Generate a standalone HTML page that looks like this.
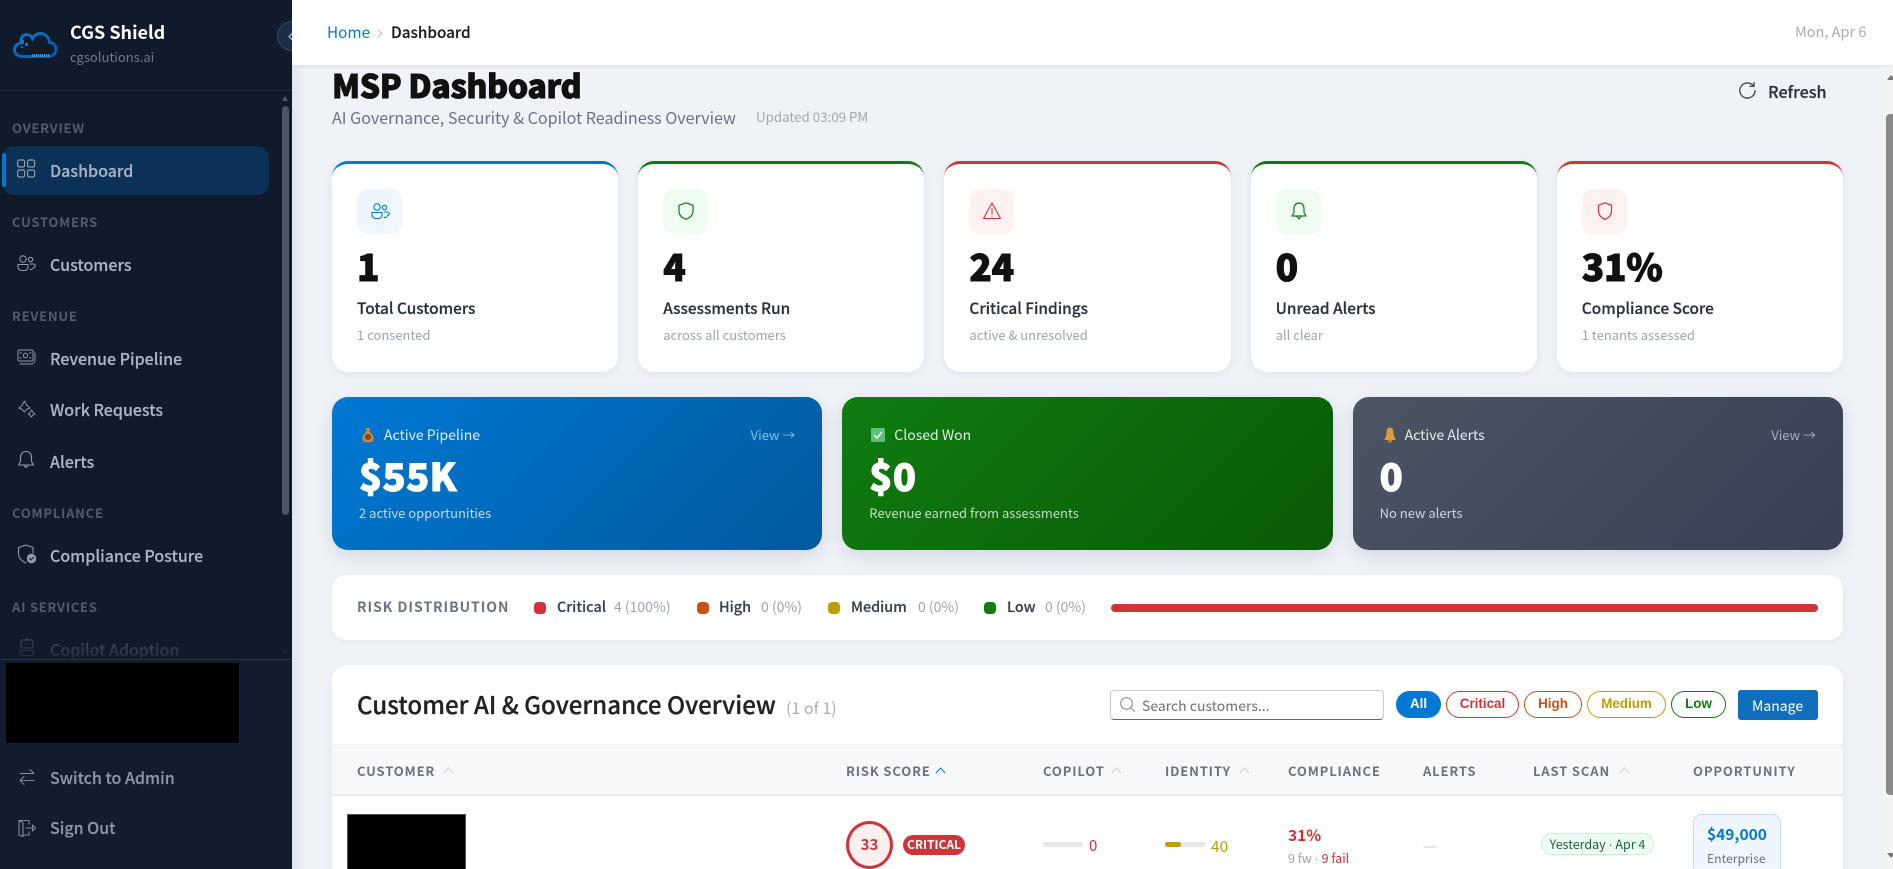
<!DOCTYPE html>
<html><head><meta charset="utf-8"><title>MSP Dashboard</title>
<style>
*{box-sizing:border-box}
html,body{margin:0;padding:0;width:1893px;height:869px;overflow:hidden;background:#eff2f7;font-family:"Noto Sans CJK SC","Liberation Sans",sans-serif}
#w{position:relative;width:1893px;height:869px;overflow:hidden;background:#eff2f7}
.a{position:absolute}
.t{position:absolute;line-height:0;white-space:nowrap}
.side{position:absolute;left:0;top:0;width:292px;height:869px;background:#0f1a2b;overflow:hidden}
.sec{font-size:13px;font-weight:700;color:#505b6b;letter-spacing:.75px;left:12px}
.nav{font-size:16px;font-weight:500;color:#a9b5c4;left:50px;-webkit-text-stroke:.15px currentColor}
.i{position:absolute;fill:none;stroke-linecap:round;stroke-linejoin:round}
.card{position:absolute;top:161px;width:286.2px;height:211px;background:#fff;border-radius:16px;border-top:3px solid;box-shadow:0 2px 8px rgba(30,50,80,.07)}
.ib{position:absolute;left:25px;top:25px;width:45px;height:45px;border-radius:11px}
.val{left:25px;font-size:37px;font-weight:900;color:#111;top:101px;-webkit-text-stroke:1px #111;letter-spacing:-.3px}
.lab{left:25px;top:144px;font-size:15.4px;font-weight:500;color:#2b3240;-webkit-text-stroke:.2px currentColor}
.sub{left:25px;top:171px;font-size:13px;color:#9ca3af}
.g{position:absolute;top:397px;width:490.3px;height:153px;border-radius:16px;box-shadow:0 6px 16px rgba(30,50,80,.13);color:#fff}
.gt{left:52px;top:38px;font-size:14px;color:rgba(255,255,255,.88)}
.gv{left:27px;top:78px;font-size:38px;font-weight:900;color:#fff;-webkit-text-stroke:1px #fff;letter-spacing:.4px}
.gs{left:27px;top:116px;font-size:13px;color:rgba(255,255,255,.75)}
.gl{right:27px;top:38px;font-size:13px;color:rgba(255,255,255,.55)}
.dot{position:absolute;top:602px;width:12px;height:12px;border-radius:4px}
.rl{top:607px;font-size:14.4px;font-weight:500;color:#374151;-webkit-text-stroke:.15px currentColor}
.rv{top:607px;font-size:14px;color:#9ca3af}
.pill{position:absolute;top:691px;height:27px;border-radius:14px;border:1px solid;font:700 13.4px "Liberation Sans",sans-serif;text-align:center;line-height:24px;background:#fff}
.th{top:771px;font-size:13px;font-weight:700;color:#6b7280;letter-spacing:.85px}
.car{position:absolute;top:767px;fill:none;stroke:#cfd3d9;stroke-width:1}
.d{font-family:"Liberation Sans",sans-serif}
</style></head><body><div id="w">

<div class="a" style="left:292px;top:65px;width:14px;height:804px;background:linear-gradient(90deg,#e2e6ec,#eff2f7)"></div>

<div class="t" style="left:332px;top:85px;font-size:32px;font-weight:900;color:#111;-webkit-text-stroke:.9px #111;letter-spacing:-.35px">MSP Dashboard</div>
<div class="t" style="left:332px;top:116.500px;font-size:16.100px;color:#6b7280">AI Governance, Security &amp; Copilot Readiness Overview</div>
<div class="t" style="left:756px;top:116.500px;font-size:13.300px;color:#a3a8b0">Updated 03:09 PM</div>
<svg class="i" style="left:1738px;top:81px" width="19" height="19" viewBox="0 0 19 19" stroke="#444" stroke-width="1.3"><path d="M15.5 5A7.6 7.6 0 1 0 17 9.5"/><path d="M16 1.5V5.4H12"/></svg>
<div class="t" style="left:1768px;top:91px;font-size:16.200px;font-weight:500;color:#2b3240;-webkit-text-stroke:.2px currentColor">Refresh</div>

<!-- KPI cards -->
<div class="card" style="left:332px;border-color:#0078d4">
 <div class="ib" style="background:#eff6fe"></div>
 <svg class="i" style="left:38px;top:37px" width="20" height="20" viewBox="0 0 20 20" stroke="#0078d4" stroke-width="1.1"><circle cx="7" cy="6" r="3.2"/><circle cx="14.5" cy="6.5" r="2.2"/><path d="M2 11.5h10v2.5a3.5 3.5 0 0 1-3.5 3.5h-3A3.5 3.5 0 0 1 2 14z"/><path d="M14 11h3.500a1.500 1.500 0 0 1 0 3.500 3 3 0 0 1-3.500 2"/></svg>
 <div class="t val">1</div><div class="t lab">Total Customers</div><div class="t sub">1 consented</div>
</div>
<div class="card" style="left:638.200px;border-color:#107c10">
 <div class="ib" style="background:#effcf1"></div>
 <svg class="i" style="left:38px;top:37px" width="20" height="20" viewBox="0 0 20 20" stroke="#107c10" stroke-width="1.2"><path d="M10 1.800 17 4.300V10c0 4-3 6.800-7 8.300C6 16.800 3 14 3 10V4.300z"/></svg>
 <div class="t val">4</div><div class="t lab">Assessments Run</div><div class="t sub">across all customers</div>
</div>
<div class="card" style="left:944.400px;border-color:#d13438">
 <div class="ib" style="background:#fdf1f1"></div>
 <svg class="i" style="left:38px;top:37px" width="20" height="20" viewBox="0 0 20 20" stroke="#d13438" stroke-width="1.1"><path d="M10 2 18.500 17.500H1.500z"/><path d="M10 7.500v5.500M10 15v.4"/></svg>
 <div class="t val">24</div><div class="t lab">Critical Findings</div><div class="t sub">active &amp; unresolved</div>
</div>
<div class="card" style="left:1250.600px;border-color:#107c10">
 <div class="ib" style="background:#effcf1"></div>
 <svg class="i" style="left:38px;top:37px" width="20" height="20" viewBox="0 0 20 20" stroke="#107c10" stroke-width="1.2"><path d="M10 2c3 0 5 2.300 5 5.500v4l2 3.500H3l2-3.500v-4C5 4.300 7 2 10 2z"/><path d="M8 15.500 10 18l2-2.500"/></svg>
 <div class="t val">0</div><div class="t lab">Unread Alerts</div><div class="t sub">all clear</div>
</div>
<div class="card" style="left:1556.800px;border-color:#d13438">
 <div class="ib" style="background:#fdf1f1"></div>
 <svg class="i" style="left:38px;top:37px" width="20" height="20" viewBox="0 0 20 20" stroke="#d13438" stroke-width="1.2"><path d="M10 1.800 16.500 4.300V10c0 4-3 6.800-6.500 8.300C6.500 16.800 3.500 14 3.500 10V4.300z"/></svg>
 <div class="t val">31%</div><div class="t lab">Compliance Score</div><div class="t sub">1 tenants assessed</div>
</div>

<!-- gradient cards -->
<div class="g" style="left:332px;background:linear-gradient(135deg,#0078d4,#005a9e)">
 <svg class="a" style="left:28px;top:30px" width="16" height="16" viewBox="0 0 16 16"><path d="M5.500 1h5l-1.500 3.500H7z" fill="#c98a3c"/><path d="M6.500 4.500h3C13 7 14 10 13.500 12.500 13 15 10.500 15.500 8 15.500S3 15 2.500 12.500C2 10 3 7 6.500 4.500z" fill="#c4843c"/><circle cx="8" cy="10" r="3" fill="#7a4a22"/></svg>
 <div class="t gt">Active Pipeline</div><div class="t gl">View →</div>
 <div class="t gv">$55K</div><div class="t gs">2 active opportunities</div>
</div>
<div class="g" style="left:842.300px;background:linear-gradient(135deg,#107c10,#0a5a08)">
 <svg class="a" style="left:28px;top:30px" width="16" height="16" viewBox="0 0 16 16"><rect x="1" y="1" width="14" height="14" rx="1.500" fill="#5fc07a"/><path d="M4 8l3 3 5-6" fill="none" stroke="#fff" stroke-width="1.400"/></svg>
 <div class="t gt">Closed Won</div>
 <div class="t gv">$0</div><div class="t gs">Revenue earned from assessments</div>
</div>
<div class="g" style="left:1352.600px;background:linear-gradient(135deg,#4b5563,#374056)">
 <svg class="a" style="left:29px;top:30px" width="16" height="16" viewBox="0 0 16 16"><path d="M8 .5c2.500 0 3.500 2.500 3.500 5 0 3 1 5.500 2.500 7.500H2c1.500-2 2.500-4.500 2.500-7.500 0-2.500 1-5 3.500-5z" fill="#e09a3a"/><rect x="6" y="13" width="4" height="2.500" rx="1" fill="#c9822c"/></svg>
 <div class="t gt">Active Alerts</div><div class="t gl">View →</div>
 <div class="t gv">0</div><div class="t gs">No new alerts</div>
</div>

<!-- risk -->
<div class="a" style="left:332px;top:575px;width:1511px;height:65px;background:#fff;border-radius:14px;box-shadow:0 2px 6px rgba(30,50,80,.05)"></div>
<div class="t" style="left:357px;top:607px;font-size:14px;font-weight:700;color:#6b7280;letter-spacing:.95px">RISK DISTRIBUTION</div>
<div class="dot" style="left:534px;background:#d13438"></div><div class="t rl" style="left:557px">Critical</div><div class="t rv" style="left:614px">4 (100%)</div>
<div class="dot" style="left:697px;background:#ca5010"></div><div class="t rl" style="left:719px">High</div><div class="t rv" style="left:761px">0 (0%)</div>
<div class="dot" style="left:828px;background:#c19c00"></div><div class="t rl" style="left:851px">Medium</div><div class="t rv" style="left:918px">0 (0%)</div>
<div class="dot" style="left:984px;background:#107c10"></div><div class="t rl" style="left:1007px">Low</div><div class="t rv" style="left:1045px">0 (0%)</div>
<div class="a" style="left:1111px;top:604px;width:707px;height:8px;border-radius:4px;background:#d13438"></div>

<!-- table -->
<div class="a" style="left:332px;top:665px;width:1511px;height:230px;background:#fff;border-radius:16px;box-shadow:0 2px 8px rgba(30,50,80,.06)"></div>
<div class="t" style="left:357px;top:704px;font-size:24.100px;font-weight:500;color:#222;-webkit-text-stroke:.25px currentColor">Customer AI &amp; Governance Overview</div>
<div class="t" style="left:786px;top:707px;font-size:16px;color:#a8adb5">(1 of 1)</div>

<div class="a" style="left:1109.500px;top:690px;width:274px;height:30px;border:1px solid #ccc;border-bottom:1.500px solid #666;border-radius:4px;background:#fff"></div>
<svg class="i" style="left:1119px;top:696px" width="17" height="17" viewBox="0 0 17 17" stroke="#8a8f96" stroke-width="1.100"><circle cx="7.500" cy="7.500" r="5.800"/><path d="M11.800 11.800 15.500 15.500"/></svg>
<div class="t" style="left:1142px;top:706px;font-size:14px;color:#6b6f76">Search customers...</div>

<div class="pill" style="left:1396px;width:45px;background:#0078d4;border-color:#0078d4;color:#fff">All</div>
<div class="pill" style="left:1446px;width:73px;border-color:#d13438;color:#d13438">Critical</div>
<div class="pill" style="left:1524px;width:58px;border-color:#ca5010;color:#ca5010">High</div>
<div class="pill" style="left:1587px;width:79px;border-color:#c19c00;color:#c19c00">Medium</div>
<div class="pill" style="left:1671px;width:55px;border-color:#107c10;color:#107c10">Low</div>
<div class="a" style="left:1738px;top:690px;width:80px;height:30px;background:#106ebe;border-radius:3px"></div>
<div class="t" style="left:1752px;top:706px;font-size:14px;color:#fff">Manage</div>

<div class="a" style="left:332px;top:744px;width:1511px;height:52px;background:#f7f8fa;border-top:1px solid #f0f1f4;border-bottom:2px solid #e5e7eb"></div>
<div class="t th" style="left:357px">CUSTOMER</div><svg class="car" style="left:443px" width="11" height="7" viewBox="0 0 11 7"><path d="M1 6 5.500 1 10 6"/></svg>
<div class="t th" style="left:846px">RISK SCORE</div><svg class="car" style="left:935px;stroke:#0078d4" width="11" height="7" viewBox="0 0 11 7"><path d="M1 6 5.500 1 10 6"/></svg>
<div class="t th" style="left:1043px">COPILOT</div><svg class="car" style="left:1111px" width="11" height="7" viewBox="0 0 11 7"><path d="M1 6 5.500 1 10 6"/></svg>
<div class="t th" style="left:1165px">IDENTITY</div><svg class="car" style="left:1239px" width="11" height="7" viewBox="0 0 11 7"><path d="M1 6 5.500 1 10 6"/></svg>
<div class="t th" style="left:1288px">COMPLIANCE</div>
<div class="t th" style="left:1423px">ALERTS</div>
<div class="t th" style="left:1533px">LAST SCAN</div><svg class="car" style="left:1619px" width="11" height="7" viewBox="0 0 11 7"><path d="M1 6 5.500 1 10 6"/></svg>
<div class="t th" style="left:1693px">OPPORTUNITY</div>

<div class="a" style="left:347px;top:814px;width:119px;height:60px;background:#000;border:1px solid #555"></div>
<div class="a" style="left:846px;top:821px;width:47px;height:48px;border-radius:50%;border:3px solid #d13438;background:#fbf0f0;color:#d13438;font-size:15px;font-weight:700;text-align:center;line-height:41px">33</div>
<div class="a" style="left:903px;top:835px;width:62px;height:20px;border-radius:10px;background:#d13438;color:#fff;font-size:12px;font-weight:700;text-align:center;line-height:19px">CRITICAL</div>
<div class="a" style="left:1043px;top:842px;width:40px;height:5px;border-radius:3px;background:#e5e7eb"></div>
<div class="t" style="left:1089px;top:846px;font-size:15px;color:#d13438">0</div>
<div class="a" style="left:1165px;top:842px;width:41px;height:5px;border-radius:3px;background:#e5e7eb"></div>
<div class="a" style="left:1165px;top:842px;width:16px;height:5px;border-radius:3px;background:#c19c00"></div>
<div class="t" style="left:1211px;top:846px;font-size:15.500px;color:#c19c00">40</div>
<div class="t" style="left:1288px;top:835px;font-size:15.500px;font-weight:700;color:#d92c2c">31%</div>
<div class="t" style="left:1288px;top:858px;font-size:12.500px;color:#9ca3af">9 fw <span class="d">·</span> <span style="color:#d92c2c">9 fail</span></div>
<div class="t" style="left:1423px;top:846px;font-size:15px;color:#c4c8ce">—</div>
<div class="a" style="left:1541px;top:833px;width:113px;height:22px;border-radius:11px;background:#f0fdf4;border:1px solid #bbf7d0;color:#166534;font-size:12.500px;text-align:center;line-height:20px">Yesterday <span class="d">·</span> Apr 4</div>
<div class="a" style="left:1693px;top:814px;width:88px;height:70px;border-radius:9px;background:#eff6ff;border:1px solid #bfdbfe"></div>
<div class="t" style="left:1707px;top:834px;font-size:15.500px;font-weight:700;color:#0078d4">$49,000</div>
<div class="t" style="left:1707px;top:858px;font-size:12.200px;color:#6b7280">Enterprise</div>

<!-- main scrollbar -->
<div class="a" style="left:1883px;top:65px;width:10px;height:804px;background:#f3f4f6"></div>
<div class="a" style="left:1886px;top:114px;width:7px;height:681px;border-radius:4px 0 0 4px;background:#8a8a8a"></div>
<div class="a" style="left:1887px;top:75px;width:0;height:0;border-left:4px solid transparent;border-right:4px solid transparent;border-bottom:5px solid #777"></div>
<div class="a" style="left:1887px;top:853px;width:0;height:0;border-left:4px solid transparent;border-right:4px solid transparent;border-top:5px solid #777"></div>

<!-- header -->
<div class="a" style="left:292px;top:0;width:1601px;height:65px;background:#fff;box-shadow:0 1px 4px rgba(30,50,80,.08)"></div>
<div class="t" style="left:327px;top:32px;font-size:15.300px;color:#0078d4">Home</div>
<svg class="i" style="left:377px;top:29px" width="6" height="9" viewBox="0 0 6 9" stroke="#b5b9c0" stroke-width="1"><path d="M1 1 4.500 4.500 1 8"/></svg>
<div class="t" style="left:391px;top:32px;font-size:15.300px;font-weight:500;color:#1a1a1a;-webkit-text-stroke:.15px currentColor">Dashboard</div>
<div class="t" style="left:1795px;top:31.500px;font-size:14.500px;color:#a8adb5">Mon, Apr 6</div>

<!-- sidebar -->
<div class="side">
 <svg class="a" style="left:0;top:0" width="80" height="80" viewBox="0 0 80 80"><defs><linearGradient id="lg" x1="0" y1="0" x2="1" y2="1"><stop offset="0" stop-color="#1272c4"/><stop offset="1" stop-color="#0b5ba6"/></linearGradient></defs>
 <path d="M24 56.500H48C53.500 56.500 56 53 56 49.500 56 45.500 53 42.500 49.500 42.500 49 37 45 33.500 40.500 33.500 37 33.500 34 35.500 32.500 38.500 30.500 34 24 33 21.500 38 20.500 40 21 42 21 43 16.500 43.500 14.500 47 14.500 50 14.500 54 18 56.500 24 56.500Z" fill="none" stroke="url(#lg)" stroke-width="3"/>
 <path d="M32 55.500h18" stroke="#4f9ad8" stroke-width="3" stroke-dasharray="1 1"/>
 <rect x="20" y="40" width="4" height="4" fill="#1272c4"/><rect x="25" y="43" width="3" height="3" fill="#1272c4"/><rect x="21" y="46" width="2" height="2" fill="#1272c4"/></svg>
 <div class="t" style="left:70px;top:32px;font-size:18px;font-weight:700;color:#fff">CGS Shield</div>
 <div class="t" style="left:70px;top:56.500px;font-size:13px;color:#6f7a8a">cgsolutions.ai</div>
 <div class="a" style="left:0;top:90px;width:292px;height:1px;background:#222e40"></div>
 <div class="a" style="left:277px;top:21px;width:30px;height:30px;border-radius:50%;background:#1a2e48;border:1px solid #33465f"></div>
 <svg class="i" style="left:288px;top:32px" width="6" height="9" viewBox="0 0 6 9" stroke="#b4bfcc" stroke-width="1.200"><path d="M4.500 1 1 4.500 4.500 8"/></svg>

 <div class="a" style="left:282px;top:106px;width:7px;height:409px;border-radius:4px;background:#4b5563"></div>
 <div class="a" style="left:282px;top:96px;width:0;height:0;border-left:3.500px solid transparent;border-right:3.500px solid transparent;border-bottom:5px solid #4b5563"></div>
 <div class="a" style="left:282px;top:650px;width:0;height:0;border-left:3.500px solid transparent;border-right:3.500px solid transparent;border-top:5px solid #2b3646"></div>

 <div class="t sec" style="top:128px">OVERVIEW</div>
 <div class="a" style="left:2px;top:146px;width:267px;height:49px;border-radius:12px;background:#0b3157"></div>
 <div class="a" style="left:2px;top:153px;width:4px;height:34px;border-radius:2px;background:#0078d4"></div>
 <svg class="i" style="left:16px;top:158px" width="20" height="20" viewBox="0 0 20 20" stroke="#8e9bab" stroke-width="1.200"><rect x="1.600" y="2" width="7" height="7" rx="1.600"/><rect x="11.600" y="2" width="7" height="7" rx="1.600"/><rect x="1.600" y="12" width="7" height="7" rx="1.600"/><rect x="11.600" y="12" width="7" height="7" rx="1.600"/></svg>
 <div class="t nav" style="top:170px">Dashboard</div>

 <div class="t sec" style="top:222px">CUSTOMERS</div>
 <svg class="i" style="left:16px;top:253px" width="20" height="20" viewBox="0 0 20 20" stroke="#8e9bab" stroke-width="1.100"><circle cx="7" cy="6" r="3.200"/><circle cx="14.500" cy="6.500" r="2.200"/><path d="M2 11.500h10v2.500a3.500 3.500 0 0 1-3.500 3.500h-3A3.500 3.500 0 0 1 2 14z"/><path d="M14 11h3.500a1.500 1.500 0 0 1 0 3.500 3 3 0 0 1-3.500 2"/></svg>
 <div class="t nav" style="top:264px">Customers</div>

 <div class="t sec" style="top:316px">REVENUE</div>
 <svg class="i" style="left:16px;top:348px" width="20" height="18" viewBox="0 0 20 18" stroke="#8e9bab" stroke-width="1"><rect x="2" y="2" width="15" height="11" rx="1.500"/><circle cx="9.500" cy="7.500" r="2.200"/><path d="M19 5v7a4 4 0 0 1-4 4H4"/><path d="M4 5h1.500M4 10h1.500M13.500 5H15M13.500 10H15"/></svg>
 <div class="t nav" style="top:358px">Revenue Pipeline</div>
 <svg class="i" style="left:17px;top:399px" width="20" height="20" viewBox="0 0 20 20" stroke="#8e9bab" stroke-width="1"><path d="M7.500 2 10 6.500 13 9 9.500 10.500 7.500 13 5 10.500 2 9 5 6.500z"/><path d="M14.500 11 16 13.500 18 15 16 16 14.500 18 13 16 11 15 13 13.500z"/></svg>
 <div class="t nav" style="top:409px">Work Requests</div>
 <svg class="i" style="left:16px;top:450px" width="20" height="20" viewBox="0 0 20 20" stroke="#8e9bab" stroke-width="1.100"><path d="M10 1.500c3.500 0 5.500 2.500 5.500 6v4l2 3.500h-15l2-3.500v-4c0-3.500 2-6 5.500-6z"/><path d="M8 15.500 10 17.500l2-2"/></svg>
 <div class="t nav" style="top:461px">Alerts</div>

 <div class="t sec" style="top:513px">COMPLIANCE</div>
 <svg class="i" style="left:16px;top:543px" width="22" height="22" viewBox="0 0 22 22" stroke="#8e9bab" stroke-width="1.100"><path d="M10 2 17 4.500V10M10 20C5.500 18 2.500 15 2.500 10.500V4.500L10 2"/><circle cx="15.500" cy="15.500" r="4.800" fill="#8e9bab" stroke="none"/><path d="M13.500 15.500 15 17l2.500-2.800" stroke="#0f1a2b" stroke-width="1"/></svg>
 <div class="t nav" style="top:555px">Compliance Posture</div>

 <div class="t sec" style="top:607px">AI SERVICES</div>
 <svg class="i" style="left:17px;top:637px" width="20" height="20" viewBox="0 0 20 20" stroke="#4d5969" stroke-width="1.100"><rect x="4" y="3" width="12" height="8" rx="2"/><path d="M8 6.500v.5M12 6.500v.5M10 1v2M3 13.500h14v1.500a3.500 3.500 0 0 1-3.500 3.500h-7A3.500 3.500 0 0 1 3 15z"/></svg>
 <div class="t nav" style="top:649px;color:#4d5969">Copilot Adoption</div>
 <div class="a" style="left:0;top:632px;width:292px;height:27px;background:linear-gradient(180deg,rgba(15,26,43,0),rgba(15,26,43,.75))"></div>

 <div class="a" style="left:0;top:659px;width:292px;height:210px;background:#111c2e;border-top:1px solid #26344a"></div>
 <div class="a" style="left:6px;top:663px;width:234px;height:80px;background:#000;border-right:1px solid #3a1420"></div>
 <svg class="i" style="left:17px;top:767px" width="20" height="20" viewBox="0 0 20 20" stroke="#7f8a99" stroke-width="1.100"><path d="M3 6.500h14M13 2.500l4 4M3 13.500h14M7 9.500l-4 4 4 4"/></svg>
 <div class="t nav" style="top:777px;color:#8d97a6">Switch to Admin</div>
 <svg class="i" style="left:17px;top:818px" width="20" height="20" viewBox="0 0 20 20" stroke="#7f8a99" stroke-width="1.100"><path d="M12 6V2.500H2V17l4 1.500V17h6v-3"/><path d="M2.500 3 6 4.500V18"/><path d="M9 10h6.500M15.500 7l3 3-3 3v-6"/></svg>
 <div class="t nav" style="top:827px;color:#8d97a6">Sign Out</div>
</div>
</div></body></html>
